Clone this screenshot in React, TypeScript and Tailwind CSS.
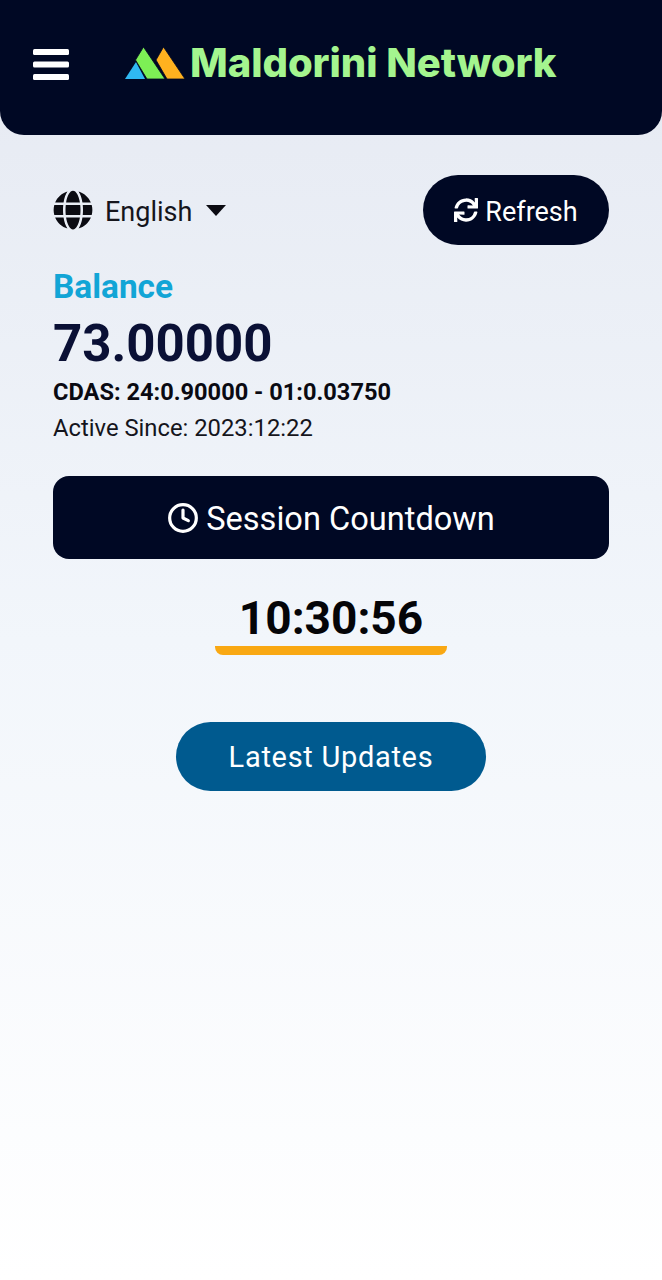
import { Clock } from "lucide-react";
import { FaGlobe, FaSync } from "react-icons/fa";

function Logo() {
  return (
    <svg width="64" height="36" viewBox="0 0 64 36" className="shrink-0">
      <polygon points="1,34 12,17 21,34" fill="#2fb8f2" />
      <polygon points="11.5,15 19.5,2 41,34 23,34" fill="#7def55" stroke="#000824" strokeWidth="0.8" />
      <polygon points="32,15 39.5,2 61,34 43,34" fill="#ffb11f" stroke="#000824" strokeWidth="0.8" />
    </svg>
  );
}

function Burger() {
  return (
    <svg width="36" height="32" viewBox="0 0 36 32" className="shrink-0">
      <rect x="0" y="0" width="36" height="6" rx="1.5" fill="#fff" />
      <rect x="0" y="12.5" width="36" height="6" rx="1.5" fill="#fff" />
      <rect x="0" y="25" width="36" height="6" rx="1.5" fill="#fff" />
    </svg>
  );
}

export default function App() {
  return (
    <div className="min-h-[1280px] bg-gradient-to-b from-[#e5e9f2] via-[#f2f6fb] via-50% to-white font-['Roboto',sans-serif]">
      <header className="h-[135px] rounded-b-[24px] bg-[#000824] flex items-start pt-[45px] pl-[33px]">
        <div className="mt-[4px]">
          <Burger />
        </div>
        <div className="ml-[55px] flex items-center gap-[2px] h-[36px]">
          <Logo />
          <span className="font-['Inter',sans-serif] font-extrabold text-[40px] leading-none text-[#a4f58f] tracking-[-0.05px] whitespace-nowrap">
            Maldorini Network
          </span>
        </div>
      </header>

      <main className="px-[53px] pt-[40px]">
        <div className="flex items-center justify-between h-[70px]">
          <div className="flex items-center">
            <FaGlobe size={40} color="#0b0b12" className="shrink-0" />
            <span className="ml-[12px] mt-[5px] text-[27px] text-[#15151c]">English</span>
            <span className="ml-[14px] w-0 h-0 border-x-[10px] border-x-transparent border-t-[11px] border-t-[#0b0b12]" />
          </div>
          <button className="h-[70px] w-[186px] rounded-[35px] bg-[#000824] text-white text-[27px] flex items-center justify-center gap-[7px]">
            <FaSync size={24} />
            <span className="mt-[5px]">Refresh</span>
          </button>
        </div>

        <div className="mt-[22px] text-[33.4px] leading-[40px] font-bold text-[#12a5d6]">Balance</div>
        <div className="mt-[7px] text-[51px] leading-[60px] font-bold text-[#0a1035]">73.00000</div>
        <div className="mt-[3px] text-[23.6px] leading-[30px] font-bold text-[#0a0a12]">CDAS: 24:0.90000 - 01:0.03750</div>
        <div className="mt-[6px] text-[23.8px] leading-[30px] text-[#15151c]">Active Since: 2023:12:22</div>

        <div className="mt-[33px] h-[83px] rounded-[16px] bg-[#000824] text-white text-[32.6px] flex items-center justify-center gap-[7px]">
          <Clock size={32} strokeWidth={2.4} />
          <span className="mt-[3px]">Session Countdown</span>
        </div>

        <div className="mt-[32px] flex flex-col items-center">
          <div className="text-[46px] leading-[54px] font-bold text-[#050508]">10:30:56</div>
          <div className="mt-[1px] h-[9px] w-[232px] rounded-b-[8px] bg-[#f9a813]" />
        </div>

        <div className="mt-[67px] flex justify-center">
          <button className="h-[69px] w-[310px] rounded-[35px] bg-[#005a8f] text-white text-[29px] tracking-[0.7px] pt-[3px]">
            Latest Updates
          </button>
        </div>
      </main>
    </div>
  );
}
